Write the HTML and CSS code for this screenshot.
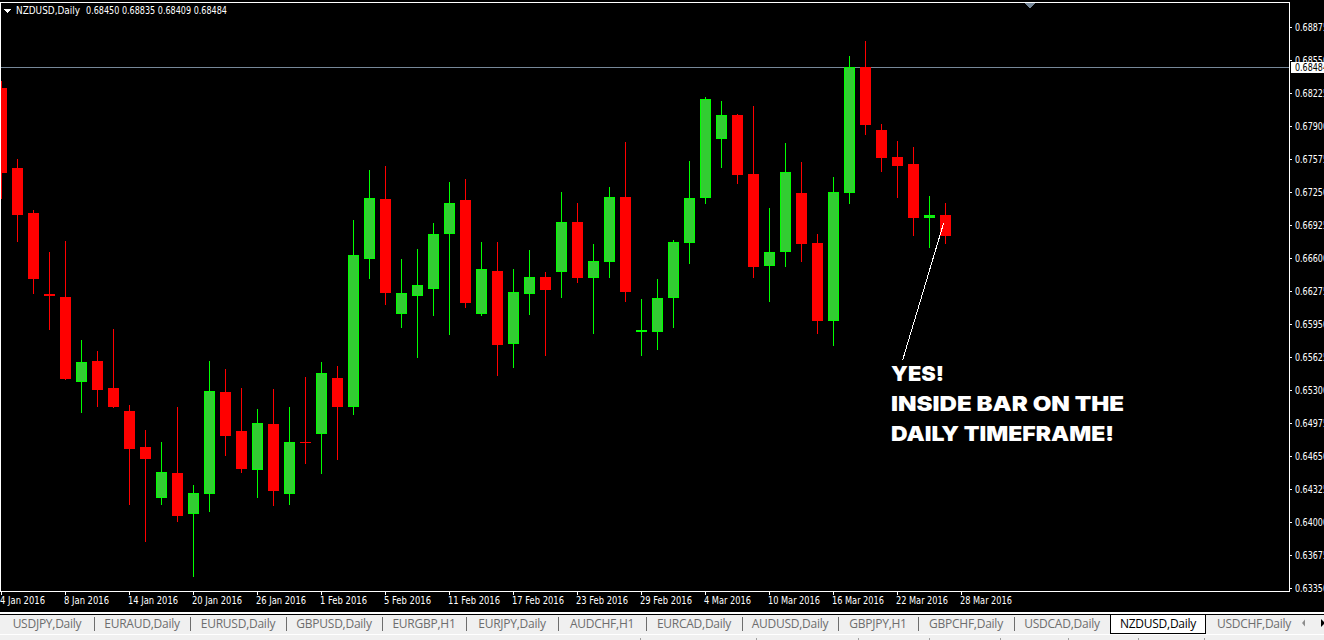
FILE: index.html
```html
<!DOCTYPE html>
<html lang="en">
<head>
    <meta charset="UTF-8">
    <title>NZDUSD,Daily</title>
    <link rel="stylesheet" href="styles.css">
</head>
<body>
    <div class="terminal">
        <svg class="chart" id="chart" width="1324" height="612" viewBox="0 0 1324 612">
            <path class="price-line" d="M1 67.5H1289"/>
            <g id="candles"></g>
            <path class="frame" d="M0.5 591.5V2.5H1289.5V591.5Z"/>
            <path class="shift-mark" d="M1024 3H1035L1029.5 8.5Z"/>
            <path class="menu-mark" d="M4 9H11L7.5 13Z"/>
            <text class="label" x="16" y="14" textLength="64" lengthAdjust="spacingAndGlyphs">NZDUSD,Daily</text>
            <text class="label" x="86" y="14" textLength="141" lengthAdjust="spacingAndGlyphs">0.68450 0.68835 0.68409 0.68484</text>
            <g id="prices"></g>
            <rect class="current-box" x="1291" y="62" width="33" height="11"/>
            <text class="label current" x="1295" y="71" textLength="33" lengthAdjust="spacingAndGlyphs">0.68484</text>
            <g id="dates"></g>
            <path class="pointer" d="M902.5 360.5L943.5 223.5"/>
            <g class="note">
                <text x="891" y="381" textLength="53" lengthAdjust="spacingAndGlyphs">YES!</text>
                <text x="891" y="411" textLength="233" lengthAdjust="spacingAndGlyphs">INSIDE BAR ON THE</text>
                <text x="891" y="441" textLength="223" lengthAdjust="spacingAndGlyphs">DAILY TIMEFRAME!</text>
            </g>
        </svg>

        <div class="tabs">
            <div class="tab w94">USDJPY,Daily</div>
            <div class="tab w96">EURAUD,Daily</div>
            <div class="tab w96">EURUSD,Daily</div>
            <div class="tab w96">GBPUSD,Daily</div>
            <div class="tab w84">EURGBP,H1</div>
            <div class="tab w92">EURJPY,Daily</div>
            <div class="tab w88">AUDCHF,H1</div>
            <div class="tab w96">EURCAD,Daily</div>
            <div class="tab w96">AUDUSD,Daily</div>
            <div class="tab w80">GBPJPY,H1</div>
            <div class="tab w96">GBPCHF,Daily</div>
            <div class="tab w96 last">USDCAD,Daily</div>
            <div class="tab w96 active">NZDUSD,Daily</div>
            <div class="tab w96 last">USDCHF,Daily</div>
            <svg class="arrows" width="22" height="19" viewBox="0 0 22 19">
                <path fill="#8c8c8c" d="M0 9L3 5.5V12.5Z"/>
                <path fill="#000" d="M19 5V13L23 9Z"/>
            </svg>
        </div>

        <div class="status">
            <span class="cell first"></span>
            <span class="cell w116"></span>
            <span class="cell w102"></span>
            <span class="cell w71"></span>
            <span class="cell w71"></span>
            <span class="cell w68"></span>
            <span class="cell w70"></span>
            <span class="cell w66"></span>
        </div>
    </div>

    <script src="chart.js"></script>
</body>
</html>
```

FILE: styles.css
```css
* {
    box-sizing: border-box;
    margin: 0;
    padding: 0;
}

body {
    background-color: #000;
    font-family: "Open Sans", "Noto Sans", sans-serif;
    overflow: hidden;
}

.terminal {
    display: flex;
    flex-direction: column;
    width: 1324px;
    height: 640px;
    overflow: hidden;
}

/* Chart */
.chart {
    display: block;
    flex: none;
    background-color: #000;
    shape-rendering: crispEdges;
}

.frame {
    fill: none;
    stroke: #fff;
}

.tick {
    fill: #fff;
}

.price-line {
    stroke: #778899;
}

.shift-mark {
    fill: #778899;
}

.menu-mark {
    fill: #fff;
}

.down {
    fill: #f00;
}

.up {
    fill: #0f0;
}

.up-body {
    fill: #32cd32;
    stroke: #0f0;
}

.label {
    fill: #fff;
    font-family: "DejaVu Sans Condensed", "DejaVu Sans", sans-serif;
    font-size: 10px;
}

.current-box {
    fill: #fff;
}

.label.current {
    fill: #000;
}

.pointer {
    stroke: #fff;
}

.note text {
    fill: #fff;
    font-family: Inter, "Open Sans", sans-serif;
    font-size: 20.5px;
    font-weight: 900;
}

/* Chart tabs */
.tabs {
    display: flex;
    flex: none;
    height: 23px;
    background: linear-gradient(#fff 0 2px, #000 2px 3px, #f0f0f0 3px 22px, #fff 22px);
    padding-top: 2px;
}

.tab {
    position: relative;
    flex: none;
    height: 20px;
    line-height: 20px;
    font-size: 12px;
    letter-spacing: -0.25px;
    color: #6d6d6d;
    text-align: center;
    white-space: nowrap;
}

.tab::after {
    content: '';
    position: absolute;
    right: -1px;
    top: 3px;
    width: 1px;
    height: 14px;
    background-color: #6d6d6d;
}

.tab.last::after,
.tab.active::after {
    display: none;
}

.tab.active {
    line-height: 18px;
    color: #000;
    background-color: #fff;
    border: 1px solid #000;
}

.w80 { width: 80px; }
.w84 { width: 84px; }
.w88 { width: 88px; }
.w92 { width: 92px; }
.w94 { width: 94px; }
.w96 { width: 96px; }

.arrows {
    flex: none;
}

/* Status bar */
.status {
    display: flex;
    flex: 1;
    background-color: #f0f0f0;
    padding-top: 3px;
}

.cell {
    flex: none;
    border-right: 1px solid #a0a0a0;
}

.first { width: 641px; }
.w116 { width: 116px; }
.w102 { width: 102px; }
.w71 { width: 71px; }
.w68 { width: 68px; }
.w70 { width: 70px; }
.w66 { width: 66px; }
```

FILE: chart.js
```js
const NS = 'http://www.w3.org/2000/svg';

// direction, wick top, body top, body bottom, wick bottom
const candles = [
    ['d', 81, 88, 173, 199], ['d', 159, 168, 215, 242], ['d', 210, 213, 279, 294],
    ['d', 252, 294, 296, 330], ['d', 241, 297, 379, 380], ['u', 340, 362, 382, 413],
    ['d', 351, 361, 390, 407], ['d', 329, 388, 407, 408], ['d', 405, 411, 449, 505],
    ['d', 430, 447, 459, 542], ['u', 442, 472, 498, 505], ['d', 407, 473, 516, 522],
    ['u', 485, 493, 514, 577], ['u', 361, 391, 494, 512], ['d', 369, 392, 436, 456],
    ['d', 388, 431, 469, 473], ['u', 409, 423, 470, 498], ['d', 389, 424, 491, 506],
    ['u', 407, 442, 494, 505], ['d', 377, 442, 443, 464], ['u', 362, 373, 434, 474],
    ['d', 366, 378, 407, 460], ['u', 220, 255, 407, 415], ['u', 170, 198, 259, 279],
    ['d', 166, 199, 293, 305], ['u', 259, 293, 314, 328], ['u', 249, 285, 296, 358],
    ['u', 223, 234, 289, 316], ['u', 182, 203, 234, 335], ['d', 179, 200, 303, 308],
    ['u', 242, 269, 314, 316], ['d', 242, 271, 345, 376], ['u', 269, 292, 344, 368],
    ['u', 250, 277, 294, 315], ['d', 272, 277, 290, 356], ['u', 192, 222, 272, 298],
    ['d', 203, 222, 278, 283], ['u', 244, 261, 278, 334], ['u', 187, 197, 262, 278],
    ['d', 142, 197, 292, 302], ['u', 299, 330, 332, 356], ['u', 279, 298, 332, 350],
    ['u', 240, 242, 298, 328], ['u', 161, 198, 243, 264], ['u', 97, 99, 198, 204],
    ['u', 101, 115, 139, 168], ['d', 114, 115, 175, 184], ['d', 106, 174, 267, 278],
    ['u', 208, 252, 266, 302], ['u', 143, 172, 252, 267], ['d', 162, 193, 244, 262],
    ['d', 234, 243, 321, 334], ['u', 177, 192, 321, 346], ['u', 56, 67, 193, 204],
    ['d', 41, 67, 125, 135], ['d', 124, 130, 158, 172], ['d', 141, 157, 166, 198],
    ['d', 147, 164, 218, 236], ['u', 196, 215, 218, 248], ['d', 203, 215, 236, 244]
];

const dates = [
    ['4 Jan 2016', 45], ['8 Jan 2016', 45], ['14 Jan 2016', 50], ['20 Jan 2016', 50],
    ['26 Jan 2016', 50], ['1 Feb 2016', 47], ['5 Feb 2016', 47], ['11 Feb 2016', 52],
    ['17 Feb 2016', 52], ['23 Feb 2016', 52], ['29 Feb 2016', 52], ['4 Mar 2016', 47],
    ['10 Mar 2016', 52], ['16 Mar 2016', 52], ['22 Mar 2016', 52], ['28 Mar 2016', 52]
];

function add(parent, tag, attrs, text) {
    const el = document.createElementNS(NS, tag);
    for (const key in attrs) {
        el.setAttribute(key, attrs[key]);
    }
    if (text) {
        el.textContent = text;
    }
    parent.appendChild(el);
}

function rect(parent, cls, x, y, width, height) {
    add(parent, 'rect', { class: cls, x, y, width, height });
}

function label(parent, x, y, textLength, text) {
    add(parent, 'text', { class: 'label', x, y, textLength, lengthAdjust: 'spacingAndGlyphs' }, text);
}

const candleGroup = document.getElementById('candles');
candles.forEach(([dir, high, top, bottom, low], i) => {
    const x = 1 + i * 16;
    const cls = dir === 'u' ? 'up' : 'down';
    rect(candleGroup, cls, x, high, 1, low - high);
    if (dir === 'u' && bottom - top > 2) {
        rect(candleGroup, 'up-body', x - 4.5, top + 0.5, 10, bottom - top - 1);
    } else {
        rect(candleGroup, cls, x - 5, top, 11, bottom - top);
    }
});

const priceGroup = document.getElementById('prices');
for (let i = 0; i < 18; i++) {
    const y = 27 + i * 33;
    rect(priceGroup, 'tick', 1290, y, 2, 1);
    label(priceGroup, 1295, y + 4, 33, (0.68875 - i * 0.00325).toFixed(5));
}

const dateGroup = document.getElementById('dates');
dates.forEach(([text, length], i) => {
    const x = 1 + i * 64;
    rect(dateGroup, 'tick', x, 592, 1, 3);
    label(dateGroup, x - 1, 604, length, text);
});
```
